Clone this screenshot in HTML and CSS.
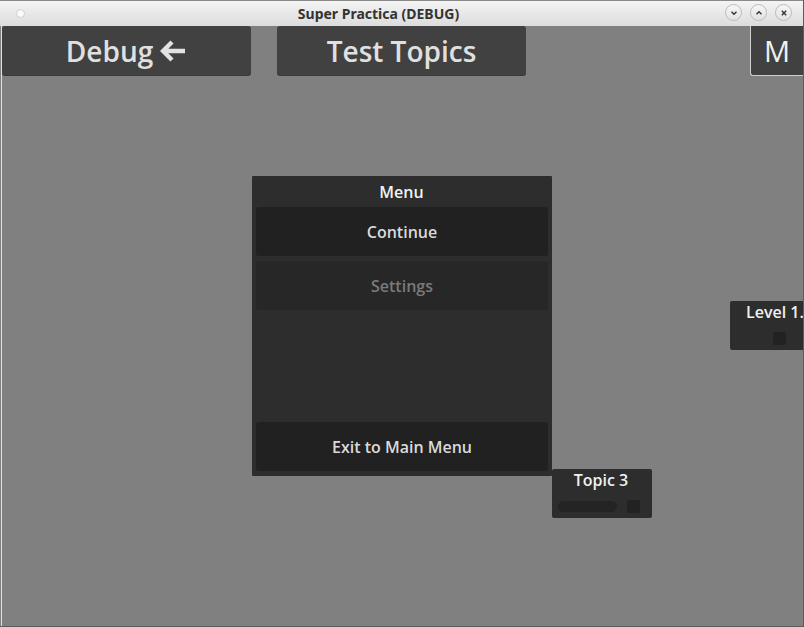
FILE: index.html
```html
<!DOCTYPE html>
<html>
<head>
<meta charset="utf-8">
<link rel="stylesheet" href="styles.css">
</head>
<body>
<div class="window">
  <div class="titlebar">
    <span class="dot"></span>
    <span class="title">Super Practica (DEBUG)</span>
    <div class="wbtns">
      <span class="wbtn"><svg width="10" height="10" viewBox="0 0 10 10"><path d="M2.5 3.8 L5 6.3 L7.5 3.8" fill="none" stroke="#333" stroke-width="1.4"/></svg></span>
      <span class="wbtn"><svg width="10" height="10" viewBox="0 0 10 10"><path d="M2.5 6.2 L5 3.7 L7.5 6.2" fill="none" stroke="#333" stroke-width="1.4"/></svg></span>
      <span class="wbtn"><svg width="10" height="10" viewBox="0 0 10 10"><path d="M2.8 2.8 L7.2 7.2 M7.2 2.8 L2.8 7.2" fill="none" stroke="#333" stroke-width="1.4"/></svg></span>
    </div>
  </div>
  <div class="content">
    <div class="topbar">
      <div class="tbtn debug">Debug <svg class="arrow" width="27" height="22" viewBox="0 0 27 22"><path d="M12 2 L3 11 L12 20 M3.5 11 L25 11" fill="none" stroke="#e2e2e2" stroke-width="4.4" stroke-linejoin="miter"/></svg></div>
      <div class="tbtn topics">Test Topics</div>
      <div class="spacer"></div>
      <div class="mbtn">M</div>
    </div>

    <div class="node level">
      <div class="node-title">Level 1.</div>
      <div class="node-row"><span class="sq"></span></div>
    </div>

    <div class="node topic">
      <div class="node-title">Topic 3</div>
      <div class="node-row"><span class="bar"></span><span class="sq"></span></div>
    </div>

    <div class="menu">
      <div class="menu-title">Menu</div>
      <div class="mitem">Continue</div>
      <div class="mitem disabled">Settings</div>
      <div class="mfill"></div>
      <div class="mitem">Exit to Main Menu</div>
    </div>
  </div>
</div>
</body>
</html>
```
FILE: styles.css
```css
html, body {
  margin: 0;
  padding: 0;
  background: #808080;
}
.window {
  width: 804px;
  height: 627px;
  display: flex;
  flex-direction: column;
  box-sizing: border-box;
  border-right: 1px solid #5c5c5c;
  border-bottom: 1px solid #5c5c5c;
  overflow: hidden;
  font-family: "Open Sans", "Noto Sans", sans-serif;
}
.titlebar {
  height: 26px;
  flex: none;
  background: linear-gradient(#f4f4f4, #dcdcdc);
  border-top: 1px solid #8a8a8a;
  box-sizing: border-box;
  display: flex;
  align-items: center;
  justify-content: center;
  position: relative;
}
.dot {
  position: absolute;
  left: 16px;
  top: 8px;
  width: 7px;
  height: 7px;
  border-radius: 50%;
  background: #fafafa;
  border: 1px solid #cfcfcf;
}
.title {
  font-family: "Noto Sans", "Open Sans", sans-serif;
  font-weight: 700;
  font-size: 14px;
  color: #333;
  margin-left: -46px;
  margin-top: -1px;
}
.wbtns {
  position: absolute;
  right: 11px;
  top: 3px;
  display: flex;
  gap: 8px;
}
.wbtn {
  width: 15px;
  height: 15px;
  border-radius: 50%;
  border: 1px solid #bcbcbc;
  background: linear-gradient(#f6f6f6, #e2e2e2);
  display: flex;
  align-items: center;
  justify-content: center;
}
.content {
  flex: 1;
  position: relative;
  background: #808080;
  border-left: 1px solid #e0e0e0;
  margin-left: 1px;
}
.topbar {
  display: flex;
  align-items: flex-start;
  gap: 26px;
}
.tbtn {
  width: 249px;
  height: 49px;
  background: #414141;
  border-radius: 3px;
  color: #e0e0e0;
  font-size: 28px;
  font-weight: 600;
  display: flex;
  align-items: center;
  justify-content: center;
  box-shadow: 0 1px 0 #3a3a3a;
}
.debug { gap: 7px; }
.arrow { margin-top: 1px; }
.spacer { flex: 1; }
.mbtn {
  width: 52px;
  height: 49px;
  background: #414141;
  border: 1px solid #cfcfcf;
  border-top: none;
  border-right: none;
  border-radius: 0 0 0 3px;
  color: #f0f0f0;
  font-size: 29px;
  font-weight: 400;
  display: flex;
  align-items: center;
  justify-content: center;
}
.menu {
  position: absolute;
  left: 250px;
  top: 150px;
  width: 300px;
  height: 300px;
  background: #2d2d2d;
  box-sizing: border-box;
  padding: 0 4px 5px;
  display: flex;
  flex-direction: column;
  gap: 5px;
  border-radius: 1px;
}
.menu-title {
  height: 26px;
  color: #f2f2f2;
  font-size: 16px;
  font-weight: 600;
  text-align: center;
  line-height: 32px;
  padding-right: 1px;
}
.mitem {
  height: 49px;
  flex: none;
  background: #212121;
  border-radius: 3px;
  color: #dadada;
  font-size: 16px;
  font-weight: 600;
  display: flex;
  align-items: center;
  justify-content: center;
}
.mitem.disabled {
  background: #272727;
  color: #7a7a7a;
}
.mfill { flex: 1; }
.node {
  position: absolute;
  height: 49px;
  background: #2d2d2d;
  border-radius: 2px;
  box-sizing: border-box;
  display: flex;
  flex-direction: column;
}
.node-title {
  color: #f0f0f0;
  font-size: 16px;
  font-weight: 600;
  text-align: center;
  height: 24px;
  line-height: 22px;
}
.node-row {
  display: flex;
  align-items: center;
  padding: 3px 11px 0 6px;
  gap: 10px;
  height: 20px;
}
.topic {
  left: 550px;
  top: 443px;
  width: 100px;
}
.topic .node-title { padding-right: 2px; }
.bar {
  width: 59px;
  height: 11px;
  border-radius: 6px;
  background: #242424;
}
.sq {
  width: 13px;
  height: 13px;
  border-radius: 2px;
  background: #222;
}
.level {
  left: 728px;
  top: 275px;
  width: 90px;
}
.level .node-title {
  text-align: left;
  padding-left: 16px;
}
.level .node-row {
  padding-left: 43px;
}
```
